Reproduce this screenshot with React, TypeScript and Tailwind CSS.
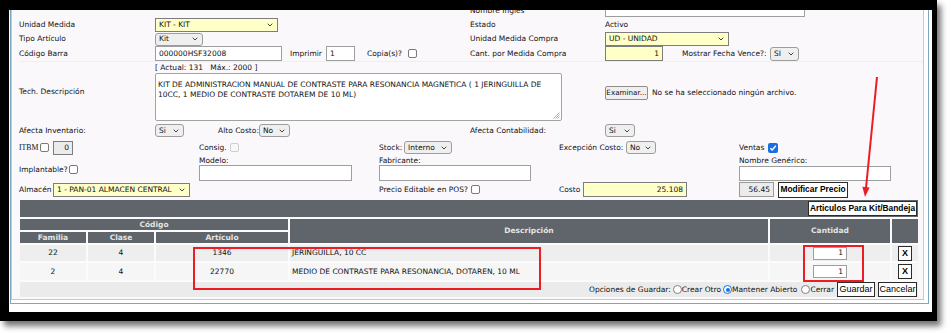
import React from "react";

const Chevron = () => (
  <svg width="6" height="4" viewBox="0 0 6 4" className="shrink-0">
    <polyline points="0.7,0.7 3,3 5.3,0.7" fill="none" stroke="#444" strokeWidth="1" />
  </svg>
);

function Sel({ cls, value, yellow = false }: { cls: string; value: string; yellow?: boolean }) {
  return (
    <div
      className={`flex items-center justify-between pl-[3px] pr-[4px] shrink-0 ${
        yellow ? "bg-[#ffffc8] border border-[#7d7d7d]" : "bg-[#efefef] border border-[#9d9d9d] rounded-[3px]"
      } ${cls}`}
    >
      <span className="whitespace-nowrap">{value}</span>
      <Chevron />
    </div>
  );
}

function Inp({ cls, value = "", bg = "bg-white", right = false, border = "border-[#9e9e9e]" }: { cls: string; value?: string; bg?: string; right?: boolean; border?: string }) {
  return (
    <div className={`flex items-center shrink-0 border ${border} ${bg} ${right ? "justify-end pr-[3px]" : "pl-[3px]"} ${cls}`}>
      <span className="whitespace-nowrap">{value}</span>
    </div>
  );
}

function Cb({ checked = false, disabled = false }: { checked?: boolean; disabled?: boolean }) {
  if (checked)
    return (
      <div className="w-[10px] h-[10px] rounded-[2px] bg-[#1a6fe0] flex items-center justify-center shrink-0">
        <svg width="8" height="8" viewBox="0 0 8 8">
          <polyline points="1.3,4.2 3.2,6 6.8,1.8" fill="none" stroke="white" strokeWidth="1.4" />
        </svg>
      </div>
    );
  return (
    <div
      className={`w-[9px] h-[9px] rounded-[2px] border shrink-0 ${
        disabled ? "border-[#cfcfcf] bg-[#f7f7f7]" : "border-[#7a7a7a] bg-white"
      }`}
    />
  );
}

function Radio({ checked = false }: { checked?: boolean }) {
  if (checked)
    return (
      <div className="w-[9px] h-[9px] rounded-full border-[1.5px] border-[#1a6fe0] bg-white flex items-center justify-center shrink-0">
        <div className="w-[4px] h-[4px] rounded-full bg-[#1a6fe0]" />
      </div>
    );
  return <div className="w-[9px] h-[9px] rounded-full border border-[#808080] bg-white shrink-0" />;
}

function Btn({ cls, label, bold = false }: { cls: string; label: string; bold?: boolean }) {
  return (
    <div
      className={`flex items-center justify-center shrink-0 bg-white border border-[#2b2b2b] font-['Liberation_Sans',Arial,sans-serif] text-black ${
        bold ? "font-bold text-[8.4px]" : "text-[9px]"
      } ${cls}`}
    >
      <span className="whitespace-nowrap">{label}</span>
    </div>
  );
}

const HeadCell = ({ children, cls = "" }: { children?: React.ReactNode; cls?: string }) => (
  <div className={`bg-[#5f656b] flex items-center justify-center font-bold text-[#e4e4e4] ${cls}`}>{children}</div>
);

export default function App() {
  return (
    <div className="relative w-[951px] h-[333px] bg-white overflow-hidden font-['DejaVu_Sans',sans-serif] text-[7.5px] text-[#111111] leading-none">
      <div className="w-[937px] h-[321px] bg-black pt-[10px] pl-[9px] pr-[5px] pb-[9px] shadow-[4px_5px_6px_rgba(0,0,0,0.55)]">
        <div className="w-full h-full bg-white pl-[1px] pr-[3px] pb-[8px]">
          <div className="h-full border-l border-r border-b border-[#7da6c3] pr-[4px] pb-[3px]">
            <div className="h-full border-l border-r border-b border-[#c9c9c9] bg-[#fbf8fb] flex flex-col">
              {/* Form, 4-column part */}
              <div className="pl-[7px] flex flex-col">
                <div className="h-[7px] overflow-hidden">
                  <div className="-mt-[9px] h-[16px] grid grid-cols-[136px_315px_135px_1fr] items-center">
                    <div />
                    <div />
                    <div className="pt-[3px]">Nombre Inglés</div>
                    <Inp cls="w-[200px] h-[15px]" />
                  </div>
                </div>
                <div className="h-[15px] grid grid-cols-[136px_315px_135px_1fr] items-center">
                  <div>Unidad Medida</div>
                  <Sel cls="w-[123px] h-[14px]" value="KIT - KIT" yellow />
                  <div>Estado</div>
                  <div>Activo</div>
                </div>
                <div className="h-[14px] grid grid-cols-[136px_315px_135px_1fr] items-center">
                  <div>Tipo Artículo</div>
                  <Sel cls="w-[48px] h-[13px]" value="Kit" />
                  <div>Unidad Medida Compra</div>
                  <Sel cls="w-[124px] h-[14px]" value="UD - UNIDAD" yellow />
                </div>
                <div className="h-[16px] grid grid-cols-[136px_315px_135px_1fr] items-center border-b border-[#f1eef1]">
                  <div>Código Barra</div>
                  <div className="flex items-center">
                    <Inp cls="w-[127px] h-[15px]" value="000000HSF32008" />
                    <span className="ml-[8px] w-[36px] whitespace-nowrap">Imprimir</span>
                    <Inp cls="w-[29px] h-[15px]" value="1" />
                    <span className="ml-[12px] w-[41px] whitespace-nowrap">Copia(s)?</span>
                    <Cb />
                  </div>
                  <div>Cant. por Medida Compra</div>
                  <div className="flex items-center">
                    <Inp cls="w-[58px] h-[15px]" value="1" bg="bg-[#ffffc8]" border="border-[#7d7d7d]" right />
                    <span className="ml-[19px] w-[88px] whitespace-nowrap">Mostrar Fecha Vence?:</span>
                    <Sel cls="w-[29px] h-[14px]" value="SI" />
                  </div>
                </div>
                <div className="h-[60px] grid grid-cols-[136px_315px_135px_1fr] items-center">
                  <div>Tech. Descripción</div>
                  <div className="flex flex-col h-full pt-[1px]">
                    <div className="h-[10px] flex items-center whitespace-pre">[ Actual: 131   Máx.: 2000 ]</div>
                    <div className="relative w-[407px] h-[48px] shrink-0 border border-[#a3a3a3] rounded-[2px] bg-white pt-[6px] pl-[2px] leading-[10px] whitespace-nowrap">
                      <div>KIT DE ADMINISTRACION MANUAL DE CONTRASTE PARA RESONANCIA MAGNETICA ( 1 JERINGUILLA DE</div>
                      <div>10CC, 1 MEDIO DE CONTRASTE DOTAREM DE 10 ML)</div>
                      <svg className="absolute right-[1px] bottom-[1px]" width="7" height="7" viewBox="0 0 7 7">
                        <line x1="6.5" y1="0.5" x2="0.5" y2="6.5" stroke="#9a9a9a" strokeWidth="0.8" />
                        <line x1="6.5" y1="2.5" x2="2.5" y2="6.5" stroke="#9a9a9a" strokeWidth="0.8" />
                        <line x1="6.5" y1="4.5" x2="4.5" y2="6.5" stroke="#9a9a9a" strokeWidth="0.8" />
                      </svg>
                    </div>
                  </div>
                  <div />
                  <div className="flex items-center pt-[2px]">
                    <div className="w-[43px] h-[14px] flex items-center justify-center bg-[#efefef] border border-[#8f8f8f] rounded-[2px] text-[7.2px]">Examinar...</div>
                    <span className="ml-[4px] whitespace-nowrap">No se ha seleccionado ningún archivo.</span>
                  </div>
                </div>
                <div className="h-[17px] grid grid-cols-[136px_315px_135px_1fr] items-center">
                  <div>Afecta Inventario:</div>
                  <div className="flex items-center">
                    <Sel cls="w-[29px] h-[13px]" value="Si" />
                    <span className="ml-[34px] w-[41px] whitespace-nowrap">Alto Costo:</span>
                    <Sel cls="w-[31px] h-[13px]" value="No" />
                  </div>
                  <div>Afecta Contabilidad:</div>
                  <Sel cls="w-[30px] h-[13px]" value="Si" />
                </div>

                {/* 5-column part */}
                <div className="h-[17px] grid grid-cols-[180px_180px_180px_180px_1fr] items-center">
                  <div className="flex items-center">
                    <span className="w-[21px] font-['Liberation_Serif',serif] text-[7.8px]">ITBM</span>
                    <Cb />
                    <Inp cls="ml-[4px] w-[20px] h-[14px]" value="0" bg="bg-[#ebebeb]" border="border-[#7d7d7d]" right />
                  </div>
                  <div className="flex items-center">
                    <span className="w-[31px]">Consig.</span>
                    <Cb disabled />
                  </div>
                  <div className="flex items-center">
                    <span className="w-[25px]">Stock:</span>
                    <Sel cls="w-[48px] h-[13px]" value="Interno" />
                  </div>
                  <div className="flex items-center">
                    <span className="w-[67px] whitespace-nowrap">Excepción Costo:</span>
                    <Sel cls="w-[30px] h-[13px]" value="No" />
                  </div>
                  <div className="flex items-center">
                    <span className="w-[29px]">Ventas</span>
                    <Cb checked />
                  </div>
                </div>
                <div className="h-[25px] grid grid-cols-[180px_180px_180px_180px_1fr]">
                  <div className="flex items-center pt-[2px]">
                    <span className="w-[50px] whitespace-nowrap">Implantable?</span>
                    <Cb />
                  </div>
                  <div className="flex flex-col justify-between pt-[1px]">
                    <span>Modelo:</span>
                    <Inp cls="w-[153px] h-[16px]" />
                  </div>
                  <div className="flex flex-col justify-between pt-[1px]">
                    <span>Fabricante:</span>
                    <Inp cls="w-[152px] h-[16px]" />
                  </div>
                  <div />
                  <div className="flex flex-col justify-between pt-[1px]">
                    <span>Nombre Genérico:</span>
                    <Inp cls="w-[152px] h-[15px]" />
                  </div>
                </div>
                <div className="h-[17px] grid grid-cols-[180px_180px_180px_180px_1fr] items-center">
                  <div className="flex items-center">
                    <span className="w-[34px]">Almacén</span>
                    <Sel cls="w-[137px] h-[14px]" value="1 - PAN-01 ALMACEN CENTRAL" yellow />
                  </div>
                  <div />
                  <div className="flex items-center">
                    <span className="w-[92px] whitespace-nowrap">Precio Editable en POS?</span>
                    <Cb />
                  </div>
                  <div className="flex items-center">
                    <span className="w-[24px]">Costo</span>
                    <Inp cls="w-[104px] h-[15px]" value="25.108" bg="bg-[#ffffc8]" border="border-[#7d7d7d]" right />
                  </div>
                  <div className="flex items-center">
                    <Inp cls="w-[35px] h-[15px]" value="56.45" bg="bg-[#ebebeb]" border="border-[#9a9a9a]" right />
                    <Btn cls="ml-[4px] w-[70px] h-[16px]" label="Modificar Precio" bold />
                  </div>
                </div>
              </div>

              {/* Table */}
              <div className="mt-[2px] ml-[8px] w-[898px] grid grid-cols-[66px_66px_132px_478px_120px_26px] grid-rows-[17px_11px_11px_16px_17px_15px] gap-[2px] bg-[#fbfbfb]">
                <div className="col-span-6 bg-[#5f656b] flex items-center justify-end pr-[1px]">
                  <Btn cls="w-[109px] h-[15px]" label="Articulos Para Kit/Bandeja" bold />
                </div>
                <HeadCell cls="col-span-3">Código</HeadCell>
                <HeadCell cls="row-span-2">Descripción</HeadCell>
                <HeadCell cls="row-span-2">Cantidad</HeadCell>
                <HeadCell cls="row-span-2" />
                <HeadCell>Familia</HeadCell>
                <HeadCell>Clase</HeadCell>
                <HeadCell>Artículo</HeadCell>

                <div className="bg-[#eeeeee] flex items-center justify-center">22</div>
                <div className="bg-[#eeeeee] flex items-center justify-center">4</div>
                <div className="bg-[#eeeeee] flex items-center justify-center">1346</div>
                <div className="bg-[#eeeeee] flex items-center pl-[2px]">JERINGUILLA, 10 CC</div>
                <div className="bg-[#eeeeee] flex items-center justify-center">
                  <Inp cls="w-[34px] h-[13px]" value="1" right />
                </div>
                <div className="bg-[#eeeeee] flex items-center justify-center">
                  <Btn cls="w-[14px] h-[15px] font-bold" label="X" />
                </div>

                <div className="bg-[#f6f6f6] flex items-center justify-center">2</div>
                <div className="bg-[#f6f6f6] flex items-center justify-center">4</div>
                <div className="bg-[#f6f6f6] flex items-center justify-center">22770</div>
                <div className="bg-[#f6f6f6] flex items-center pl-[2px]">MEDIO DE CONTRASTE PARA RESONANCIA, DOTAREN, 10 ML</div>
                <div className="bg-[#f6f6f6] flex items-center justify-center">
                  <Inp cls="w-[34px] h-[13px]" value="1" right />
                </div>
                <div className="bg-[#f6f6f6] flex items-center justify-center">
                  <Btn cls="w-[14px] h-[15px] font-bold" label="X" />
                </div>

                <div className="col-span-6 bg-[#ebebeb] flex items-center justify-end pr-[1px] whitespace-nowrap">
                  <span>Opciones de Guardar:</span>
                  <span className="ml-[2px]"><Radio /></span>
                  <span>Crear Otro</span>
                  <span className="ml-[2px]"><Radio checked /></span>
                  <span>Mantener Abierto</span>
                  <span className="ml-[4px]"><Radio /></span>
                  <span>Cerrar</span>
                  <Btn cls="ml-[3px] w-[38px] h-[15px]" label="Guardar" />
                  <Btn cls="ml-[3px] w-[39px] h-[15px]" label="Cancelar" />
                </div>
              </div>
            </div>
          </div>
        </div>
      </div>

      {/* Red annotations */}
      <div className="absolute left-[193px] top-[247px] w-[348px] h-[43px] border-2 border-[#ec1c24]" />
      <div className="absolute left-[803px] top-[245px] w-[61px] h-[37px] border-2 border-[#ec1c24]" />
      <svg className="absolute left-0 top-0 pointer-events-none" width="951" height="333" viewBox="0 0 951 333">
        <line x1="877" y1="77" x2="866" y2="188" stroke="#ec1c24" strokeWidth="2" />
        <polygon points="865,197 869.6,187.4 862.4,186.7" fill="#ec1c24" />
      </svg>
    </div>
  );
}
